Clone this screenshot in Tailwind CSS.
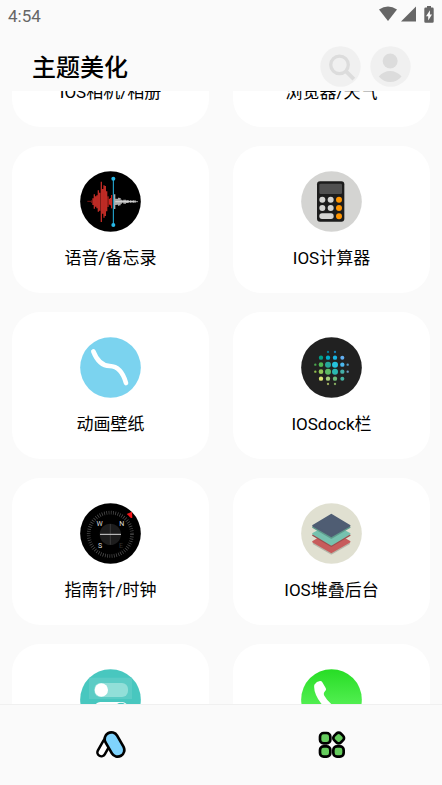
<!DOCTYPE html>
<html lang="zh-CN">
<head>
<meta charset="utf-8">
<meta name="viewport" content="width=device-width, initial-scale=1">
<title>主题美化</title>
<script src="https://cdn.jsdelivr.net/npm/@tailwindcss/browser@4"></script>
</head>
<body class="flex h-screen flex-col overflow-hidden bg-[#fafafa] font-[Roboto,'Noto_Sans_CJK_SC',sans-serif] text-black">
<div class="flex h-8 shrink-0 items-center justify-between pr-2 pl-2 text-[#666]">
  <time class="text-[17px] leading-8">4:54</time>
  <div class="flex h-8 items-center gap-1 pb-1">
    <svg class="h-4 w-[18px]" viewBox="0 0 18 16" fill="#666" aria-hidden="true"><path d="M0 3.6Q9-2.8 18 3.6L9 15Z"/></svg>
    <svg class="h-4 w-[15px]" viewBox="0 0 15 16" fill="#666" aria-hidden="true"><path d="M15 0.5V15.5H0Z"/></svg>
    <svg class="ml-1 h-[17px] w-[10px]" viewBox="0 0 10 17" aria-hidden="true"><path fill="#666" d="M3 0h4v1.6h1.5Q9.7 1.6 9.7 3v12.500q0 1.300-1.300 1.300H1.500Q.3 16.800.3 15.500V3Q.3 1.600 1.600 1.600H3Z"/><path fill="#fafafa" d="M6 4.200 2 10.200h2.200v4.300L8 8.600H5.900Z"/></svg>
  </div>
</div>
<header class="flex h-[59px] shrink-0 items-start justify-between pt-3.5 pr-[31px] pl-8">
  <h1 class="text-2xl leading-[44px] font-medium">主题美化</h1>
  <div class="flex gap-[9px]">
    <button type="button" aria-label="搜索" class="size-[41px]"><svg viewBox="0 0 126 126" class="size-full"><circle cx="63" cy="63" r="62" fill="#f0f0f0"/><circle cx="60" cy="58" r="27" fill="none" stroke="#dcdcdc" stroke-width="10"/><path d="m80 78 24 24" stroke="#dcdcdc" stroke-width="12"/></svg></button>
    <button type="button" aria-label="我的" class="size-[41px]"><svg viewBox="0 0 126 126" class="size-full"><circle cx="63" cy="63" r="62" fill="#f0f0f0"/><circle cx="62" cy="46" r="23" fill="#dcdcdc"/><path d="M27 94Q42 77 62 77T97 94Q82 111 62 111T27 94Z" fill="#dcdcdc"/></svg></button>
  </div>
</header>
<main class="min-h-0 flex-1 overflow-hidden px-3">
  <div class="-mt-[111px] grid grid-cols-2 gap-x-6 gap-y-[19px]">
    <a href="#camera" class="flex h-[147px] flex-col items-center rounded-[28px] bg-white pt-[25px]"><span class="size-[61px] rounded-full bg-neutral-300"></span><span class="mt-3 text-[17px] leading-7">IOS相机/相册</span></a>
    <a href="#browser" class="flex h-[147px] flex-col items-center rounded-[28px] bg-white pt-[25px]"><span class="size-[61px] rounded-full bg-sky-400"></span><span class="mt-3 text-[17px] leading-7">浏览器/天气</span></a>

    <a href="#voice" class="flex h-[147px] flex-col items-center rounded-[28px] bg-white pt-[25px]">
      <svg class="size-[61px]" viewBox="30 33 183 183" aria-hidden="true"><circle cx="121.500" cy="124.500" r="91"/>
        <path stroke="#761815" stroke-width="3" d="M52 124h14M65 121v8"/>
        <path stroke="#bd2b25" stroke-width="4" d="M69 115v20M73 103v43M77 109v31M81 106v39M85 91v64M89 98v54M94 65v121M98 87v74M102 76v97M106 78v90M110 94v60"/>
        <path stroke="#f22c24" stroke-width="3" d="M114 109v32M118 117v17M121 114v22M125 105v40"/>
        <path stroke="#aaa" stroke-width="4" d="M134 103v44M138 116v19M142 116v18M146 113v24M150 114v22M154 119v12M158 121v7M162 119v12M166 119v12M170 121v8M174 120v9M178 122v5M182 121v7M186 122v5M190 121v7M195 121v7"/>
        <path stroke="#eee" stroke-width="2" d="M136 125h68"/>
        <path stroke="#27b8e7" stroke-width="3" d="M130 56v139"/><circle cx="130" cy="56" r="6" fill="#27b8e7"/><circle cx="130" cy="195" r="6" fill="#27b8e7"/></svg>
      <span class="mt-3 text-[17px] leading-7">语音/备忘录</span></a>
    <a href="#calculator" class="flex h-[147px] flex-col items-center rounded-[28px] bg-white pt-[25px]">
      <svg class="size-[61px]" viewBox="30 33 183 183" aria-hidden="true"><circle cx="121.500" cy="124.500" r="91" fill="#d4d4d2"/><rect x="78" y="64" width="82" height="121" rx="9" fill="#1c1c1c"/><rect x="85" y="71" width="68" height="31" rx="4" fill="#505050"/>
        <g fill="#d4d4d2"><circle cx="94" cy="119" r="9"/><circle cx="119" cy="119" r="9"/><circle cx="94" cy="144" r="9"/><circle cx="119" cy="144" r="9"/><rect x="85" y="160" width="43" height="17" rx="8"/></g>
        <g fill="#ff9500"><circle cx="144" cy="119" r="9"/><circle cx="144" cy="144" r="9"/><circle cx="144" cy="169" r="9"/></g></svg>
      <span class="mt-3 text-[17px] leading-7">IOS计算器</span></a>

    <a href="#wallpaper" class="flex h-[147px] flex-col items-center rounded-[28px] bg-white pt-[25px]">
      <svg class="size-[61px]" viewBox="30 33 183 183" aria-hidden="true"><circle cx="121.500" cy="124.500" r="91" fill="#7bd3ef"/><path d="M70 76C80 102 96 119 119 120C145 121 160 142 168 171" fill="none" stroke="#fff" stroke-width="14" stroke-linecap="round"/></svg>
      <span class="mt-3 text-[17px] leading-7">动画壁纸</span></a>
    <a href="#dock" class="flex h-[147px] flex-col items-center rounded-[28px] bg-white pt-[25px]">
      <svg class="size-[61px]" viewBox="30 33 183 183" aria-hidden="true"><circle cx="121.500" cy="124.500" r="91" fill="#212121"/>
        <circle cx="111" cy="78" r="3.500" fill="#087995"/><circle cx="132" cy="78" r="3.500" fill="#1781b8"/>
        <circle cx="90" cy="95" r="6.500" fill="#009e87"/><circle cx="111" cy="95" r="6.500" fill="#00aecb"/><circle cx="132" cy="95" r="6.500" fill="#19b4e4"/><circle cx="154" cy="95" r="6" fill="#63aff1"/>
        <circle cx="73" cy="116" r="3.500" fill="#4aa54d"/><circle cx="90" cy="116" r="7" fill="#50b653"/><circle cx="111" cy="116" r="9" fill="#26a69a"/><circle cx="132" cy="116" r="9" fill="#25c2dc"/><circle cx="154" cy="116" r="6.500" fill="#4bb8ef"/><circle cx="170" cy="116" r="3.500" fill="#579ec6"/>
        <circle cx="73" cy="137" r="3.500" fill="#91bd4e"/><circle cx="90" cy="137" r="7" fill="#91c757"/><circle cx="111" cy="137" r="9" fill="#5dba64"/><circle cx="132" cy="137" r="9" fill="#29b9b0"/><circle cx="154" cy="137" r="6.500" fill="#44afa8"/><circle cx="170" cy="137" r="3.500" fill="#6c9ec4"/>
        <circle cx="90" cy="158" r="6.500" fill="#dce775"/><circle cx="111" cy="158" r="6.500" fill="#a6cf7a"/><circle cx="132" cy="158" r="6.500" fill="#6ebd79"/><circle cx="154" cy="158" r="6" fill="#44b1a2"/>
        <circle cx="111" cy="174" r="3.500" fill="#9fae5e"/><circle cx="132" cy="174" r="3.500" fill="#86aa60"/></svg>
      <span class="mt-3 text-[17px] leading-7">IOSdock栏</span></a>

    <a href="#compass" class="flex h-[147px] flex-col items-center rounded-[28px] bg-white pt-[25px]">
      <svg class="size-[61px]" viewBox="30 33 183 183" aria-hidden="true"><circle cx="121.500" cy="124.500" r="91"/><circle cx="121" cy="127" r="65" fill="none" stroke="#555" stroke-width="11" stroke-dasharray="2 4.800"/><circle cx="121" cy="127" r="32" fill="#1d1d1d"/><path d="M121 96v62" stroke="#3c3c3c" stroke-width="3"/><path d="M90 127h63" stroke="#d8d8d8" stroke-width="3"/><path d="m170 66 16-7 1 18q-4 2-7-1-3-5-10-10Z" fill="#f5161a"/>
        <g font-family="Roboto, sans-serif" font-size="21" text-anchor="middle" fill="#ddd"><text x="89" y="102">W</text><text x="155" y="101">N</text><text x="90" y="167">S</text><text x="153" y="167" fill="#333">E</text></g></svg>
      <span class="mt-3 text-[17px] leading-7">指南针/时钟</span></a>
    <a href="#stack" class="flex h-[147px] flex-col items-center rounded-[28px] bg-white pt-[25px]">
      <svg class="size-[61px]" viewBox="30 33 183 183" aria-hidden="true"><circle cx="121.500" cy="124.500" r="91" fill="#e0e0d1"/>
        <g stroke-width="5" stroke-linejoin="round"><path d="m66 154 55 31 55-31" fill="#b5b6a9" stroke="#b5b6a9"/><path d="m66 149 55-32 55 32-55 32Z" fill="#c75c5c" stroke="#c75c5c"/><path d="m66 130 55 32 55-32-55-27Z" fill="#9e4d4d" stroke="#9e4d4d"/><path d="m66 125 55-30 55 30-55 33Z" fill="#76c2af" stroke="#76c2af"/><path d="m66 106 55 32 55-32-55-27Z" fill="#5e9b8c" stroke="#5e9b8c"/><path d="m66 101 55-33 55 33-55 32Z" fill="#4f5d73" stroke="#4f5d73"/></g></svg>
      <span class="mt-3 text-[17px] leading-7">IOS堆叠后台</span></a>

    <a href="#control" aria-label="控制中心" class="flex h-[147px] flex-col items-center rounded-[28px] bg-white pt-[25px]">
      <svg class="size-[61px]" viewBox="240 87 183 183" aria-hidden="true"><circle cx="331.500" cy="178.500" r="91" fill="#48c7bf"/><path d="M267 113h129v64H267Z" fill="#5bccc5"/><rect x="283" y="129" width="101" height="42" rx="18" fill="#91dfd8"/><circle cx="304" cy="150" r="20" fill="#fff"/><rect x="283" y="186" width="101" height="42" rx="18" fill="#fff"/><circle cx="363" cy="207" r="19" fill="#48c7bf"/></svg>
    </a>
    <a href="#phone" aria-label="电话" class="flex h-[147px] flex-col items-center rounded-[28px] bg-white pt-[25px]">
      <svg class="size-[61px]" viewBox="240 87 183 183" aria-hidden="true"><defs><linearGradient id="call" x2="0" y2="1"><stop stop-color="#27dd25"/><stop offset="1" stop-color="#70fb70"/></linearGradient></defs><circle cx="331.500" cy="178.500" r="91" fill="url(#call)"/><path fill="#fff" d="M280 134Q287 124 297 123Q301 122 304 127L314 144Q317 149 312 154Q306 160 310 167Q318 181 332 193Q342 203 349 197Q356 189 362 193L380 205Q387 210 382 217Q373 232 354 229Q325 222 300 190Q276 157 280 134Z"/></svg>
    </a>
  </div>
</main>
<nav class="grid h-[81px] shrink-0 grid-cols-2 border-t border-[#f0f0f0] bg-[#fafafa]" aria-label="主导航">
  <a href="#home" aria-label="首页" class="flex items-center justify-center">
    <svg class="size-8" viewBox="284 268 96 96" fill="none" stroke-linecap="round" aria-hidden="true"><path d="m303 338 17-30" stroke="#000" stroke-width="31"/><path d="m303 338 17-30" stroke="#fff" stroke-width="16"/><path d="m333 298 19 33" stroke="#000" stroke-width="48"/><path d="m333 298 19 33" stroke="#7fd3fd" stroke-width="32"/></svg>
  </a>
  <a href="#themes" aria-label="主题" aria-current="page" class="flex items-center justify-center">
    <svg class="size-8" viewBox="284 267 96 96" fill="#65cc5d" stroke="#000" stroke-width="8" aria-hidden="true"><rect x="296" y="279" width="31" height="31" rx="11"/><rect x="296" y="319" width="31" height="31" rx="11"/><rect x="336" y="319" width="31" height="31" rx="11"/><rect x="338" y="280" width="28" height="28" rx="9" transform="rotate(45 352 294)"/></svg>
  </a>
</nav>
</body>
</html>
